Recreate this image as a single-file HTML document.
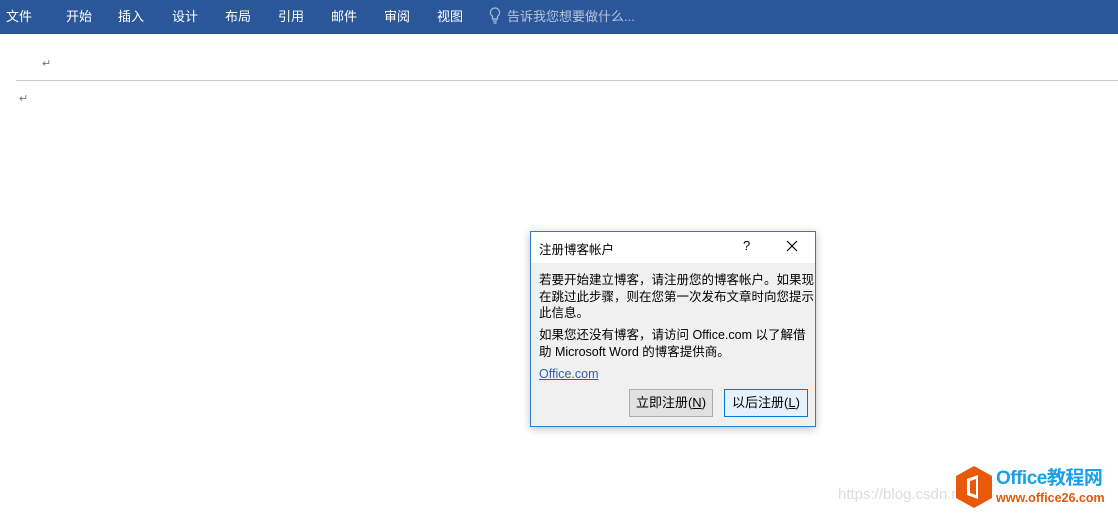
<!DOCTYPE html>
<html><head><meta charset="utf-8"><style>
*{margin:0;padding:0;box-sizing:border-box}
body{width:1118px;height:515px;background:#fff;position:relative;overflow:hidden;font-family:"Liberation Sans","Noto Sans CJK SC",sans-serif}
.rib{position:absolute;left:0;top:0;width:1118px;height:34px;background:#2b579a;color:#fff;font-size:13px}
.rib span{position:absolute;top:6px}
.ab{position:absolute;color:#777;font-size:11px}
.dlg{position:absolute;left:530px;top:231px;width:286px;height:196px;border:1px solid #2b7bd3;background:#f0f0f0;box-shadow:0 2px 8px rgba(0,0,0,.25);font-size:12.5px;color:#000}
.tb{height:31px;background:#fff;position:relative}
.tb .t{position:absolute;left:8px;top:7px;font-size:12.5px}
.p{position:absolute;left:8px;width:276px;line-height:16.5px}
.btn{position:absolute;top:157px;height:28px;width:84px;border:1px solid #adadad;background:#e1e1e1;text-align:center;line-height:26px;font-size:13px}
</style></head><body>
<div class="rib">
<span style="left:6px">文件</span><span style="left:66px">开始</span><span style="left:118px">插入</span><span style="left:172px">设计</span><span style="left:225px">布局</span><span style="left:278px">引用</span><span style="left:331px">邮件</span><span style="left:384px">审阅</span><span style="left:437px">视图</span>
<svg style="position:absolute;left:489px;top:7px" width="12" height="18" viewBox="0 0 12 18"><path d="M6 1a4.5 4.5 0 0 0-2.5 8.3V12h5V9.3A4.5 4.5 0 0 0 6 1z M4 14h4 M4.5 16h3" fill="none" stroke="#aebfd9" stroke-width="1.2"/></svg>
<span style="left:507px;color:#b5c4dc">告诉我您想要做什么...</span>
</div>
<div class="ab" style="left:42px;top:57px">↵</div>
<div style="position:absolute;left:16px;top:80px;width:1102px;height:1px;background:#c6c6c6"></div>
<div class="ab" style="left:19px;top:92px">↵</div>
<div class="dlg">
<div class="tb"><span class="t">注册博客帐户</span><span style="position:absolute;left:212px;top:6px;font-size:13px">?</span>
<svg style="position:absolute;left:255px;top:8px" width="12" height="12"><path d="M1 1L11 11M11 1L1 11" stroke="#000" stroke-width="1.2"/></svg></div>
<div class="p" style="top:40px">若要开始建立博客，请注册您的博客帐户。如果现在跳过此步骤，则在您第一次发布文章时向您提示此信息。</div>
<div class="p" style="top:95px">如果您还没有博客，请访问 Office.com 以了解借助 Microsoft Word 的博客提供商。</div>
<div class="p" style="top:134px;color:#2f63a8;text-decoration:underline">Office.com</div>
<div class="btn" style="left:98px">立即注册(<u>N</u>)</div>
<div class="btn" style="left:193px;border-color:#0078d7;background:#e5f1fb">以后注册(<u>L</u>)</div>
</div>
<div style="position:absolute;left:838px;top:486px;color:#ddd;font-size:15px">https://blog.csdn.net/</div>
<svg style="position:absolute;left:954px;top:465px" width="40" height="44" viewBox="0 0 40 44"><path d="M20 1L38 11V33L20 43L2 33V11Z" fill="#e8590c"/><path d="M13 14L24 10V34L13 30Z" fill="#fff"/><path d="M16 16L22 14V30L16 28Z" fill="#e8590c"/></svg>
<div style="position:absolute;left:996px;top:467px;color:#1aa0e8;font-size:19px;font-weight:bold;line-height:24px;white-space:nowrap;letter-spacing:-0.5px">Office教程网</div>
<div style="position:absolute;left:996px;top:491px;color:#e05a0c;font-size:12.5px;font-weight:bold;white-space:nowrap">www.office26.com</div>
</body></html>
